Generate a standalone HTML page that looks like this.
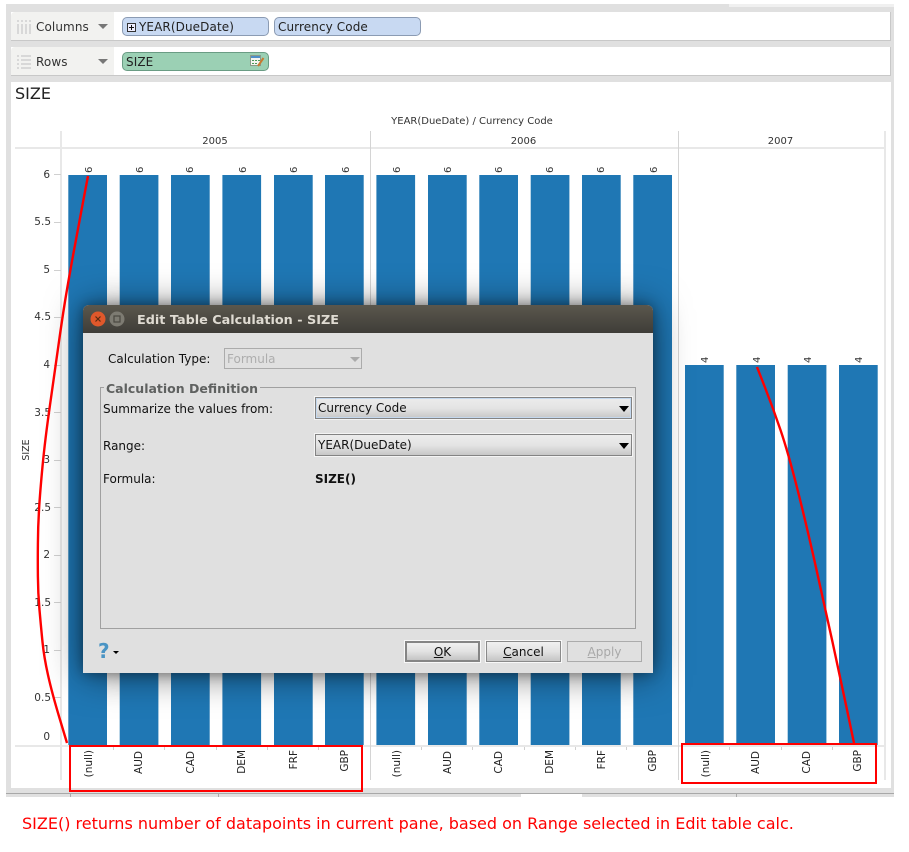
<!DOCTYPE html>
<html><head><meta charset="utf-8"><title>SIZE</title>
<style>
html,body{margin:0;padding:0;background:#fff}
body{width:909px;height:852px;position:relative;overflow:hidden;font-family:"DejaVu Sans",sans-serif;color:#222}
div{position:absolute;box-sizing:border-box}
.pill{border-radius:5px;border:1px solid #8b9bb3;background:#c8d9f2;font-size:12px;letter-spacing:.1px;line-height:19px;padding-left:3px;color:#222;white-space:nowrap}
.shelf{left:11px;width:880px;height:29px;background:#fff;border-bottom:1px solid #c8c8c8;border-right:1px solid #c8c8c8}
.hd{left:11px;width:103px;height:28px;background:#f2f2f0;border-radius:4px 0 0 0;font-size:12px;letter-spacing:.1px;line-height:30px;padding-left:25px;color:#333}
.arr{width:0;height:0;border-left:5px solid transparent;border-right:5px solid transparent;border-top:5px solid #777}
.l{font-size:12px;line-height:16px;color:#111;white-space:nowrap}
.combo{left:315px;width:317px;height:22px;border:1px solid #838383;outline:1px solid #f4f4f4;background:linear-gradient(#ececec,#e4e4e4 50%,#c6c6c6);font-size:12px;line-height:21px;padding-left:2px;color:#111}
.ca{top:8px;width:0;height:0;border-left:5px solid transparent;border-right:5px solid transparent;border-top:6px solid #000;right:2px}
.btn{top:641px;width:75px;height:21px;text-align:center;font-size:12px;line-height:21px;color:#111;background:linear-gradient(#f0f0f0,#e2e2e2 50%,#c4c4c4);border:1px solid #8a8a8a;outline:1px solid #f8f8f8}
</style></head><body>
<div style="left:6px;top:4px;width:888px;height:793px;background:#e0e0e0"></div>
<div style="left:729px;top:4px;width:165px;height:3px;background:#f0f0f0"></div>
<div style="left:6px;top:793px;width:888px;height:1px;background:#a8a8a8"></div>
<div style="left:521px;top:794px;width:61px;height:3px;background:#fff"></div>
<div style="left:70px;top:794px;width:1px;height:3px;background:#aaa"></div>
<div style="left:218px;top:794px;width:1px;height:3px;background:#aaa"></div>
<div style="left:736px;top:794px;width:1px;height:3px;background:#aaa"></div>

<div class="shelf" style="top:12px"></div>
<div class="hd" style="top:12px">Columns</div>
<div class="arr" style="left:98px;top:24px"></div>
<svg style="position:absolute;left:16px;top:19px" width="16" height="15"><g fill="#d8d8d8"><rect x="1" y="1" width="2" height="2"/><rect x="5" y="1" width="2" height="2"/><rect x="9" y="1" width="2" height="2"/><rect x="13" y="1" width="2" height="2"/><rect x="1" y="5" width="2" height="10"/><rect x="5" y="5" width="2" height="10"/><rect x="9" y="5" width="2" height="10"/><rect x="13" y="5" width="2" height="10"/></g></svg>
<div class="pill" style="left:122px;top:17px;width:147px;height:19px;padding-left:16px">YEAR(DueDate)</div>
<svg style="position:absolute;left:127px;top:23px" width="9" height="9"><rect x=".5" y=".5" width="8" height="8" fill="#eef" stroke="#333"/><path d="M2 4.500H7M4.500 2V7" stroke="#111"/></svg>
<div class="pill" style="left:274px;top:17px;width:147px;height:19px">Currency Code</div>

<div class="shelf" style="top:47px"></div>
<div class="hd" style="top:47px">Rows</div>
<div class="arr" style="left:98px;top:59px"></div>
<svg style="position:absolute;left:16px;top:54px" width="16" height="16"><g fill="#d8d8d8"><rect x="1" y="1" width="2" height="2"/><rect x="5" y="1" width="10" height="2"/><rect x="1" y="5" width="2" height="2"/><rect x="5" y="5" width="10" height="2"/><rect x="1" y="9" width="2" height="2"/><rect x="5" y="9" width="10" height="2"/><rect x="1" y="13" width="2" height="2"/><rect x="5" y="13" width="10" height="2"/></g></svg>
<div class="pill" style="left:122px;top:52px;width:147px;height:19px;background:#9bd0b4;border-color:#6a9c84">SIZE</div>
<svg style="position:absolute;left:250px;top:55px" width="15" height="12"><rect x=".5" y=".5" width="10" height="10" fill="#f4f4f0" stroke="#8a9a8a"/><rect x="1" y="1" width="9" height="2" fill="#4f8fc8"/><g fill="#4a9a5a"><rect x="2" y="5" width="2" height="1"/><rect x="5" y="5" width="2" height="1"/><rect x="8" y="5" width="2" height="1"/><rect x="2" y="8" width="2" height="1"/><rect x="5" y="8" width="2" height="1"/></g><path d="M8 11L13.500 3" stroke="#c87a30" stroke-width="2"/></svg>

<div style="left:11px;top:82px;width:880px;height:706px;background:#fff"></div>
<div style="left:15px;top:84px;font-size:16px;line-height:20px;color:#222">SIZE</div>

<svg style="position:absolute;left:0;top:0" width="909" height="852" font-family="DejaVu Sans" font-size="10" fill="#333">
<text x="472" y="124" text-anchor="middle" font-size="10">YEAR(DueDate) / Currency Code</text>
<g text-anchor="middle" font-size="10"><text x="215" y="144">2005</text><text x="523.5" y="144">2006</text><text x="780.5" y="144">2007</text></g>
<g fill="#e8e8e8"><rect x="15" y="147" width="870" height="2"/><rect x="15" y="745" width="870" height="2"/><rect x="60" y="131" width="2" height="649"/><rect x="884" y="131" width="2" height="649"/></g>
<rect x="370" y="131" width="1" height="649" fill="#d4d4d4"/><rect x="678" y="131" width="1" height="649" fill="#d4d4d4"/>
<g fill="#1f77b4">
<rect x="68.3" y="175" width="38.7" height="570"/><rect x="119.7" y="175" width="38.7" height="570"/><rect x="171" y="175" width="38.7" height="570"/><rect x="222.4" y="175" width="38.7" height="570"/><rect x="274" y="175" width="38.7" height="570"/><rect x="325" y="175" width="38.7" height="570"/>
<rect x="376.4" y="175" width="38.7" height="570"/><rect x="428" y="175" width="38.7" height="570"/><rect x="479.3" y="175" width="38.7" height="570"/><rect x="530.7" y="175" width="38.7" height="570"/><rect x="582" y="175" width="38.7" height="570"/><rect x="633.3" y="175" width="38.7" height="570"/>
<rect x="685" y="365" width="38.7" height="380"/><rect x="736.3" y="365" width="38.7" height="380"/><rect x="787.7" y="365" width="38.7" height="380"/><rect x="839" y="365" width="38.7" height="380"/>
</g>
<g stroke="#d0d0d0"><path d="M54 174.500H61M54 222.500H61M54 270.500H61M54 317.500H61M54 365.500H61M54 412.500H61M54 460.500H61M54 507.500H61M54 555.500H61M54 602.500H61M54 650.500H61M54 697.500H61"/>
<path d="M113.500 747V750M164.500 747V750M216.500 747V750M267.500 747V750M318.500 747V750M421.500 747V750M472.500 747V750M524.500 747V750M575.500 747V750M626.500 747V750M729.500 747V750M781.500 747V750M832.500 747V750"/></g>
<g text-anchor="end" font-size="10.5" fill="#333"><text x="50" y="178">6</text><text x="51" y="225">5.5</text><text x="50" y="273">5</text><text x="51" y="320">4.5</text><text x="50" y="368">4</text><text x="51" y="416">3.5</text><text x="50" y="463">3</text><text x="51" y="511">2.5</text><text x="50" y="558">2</text><text x="51" y="606">1.5</text><text x="50" y="653">1</text><text x="51" y="701">0.5</text><text x="50" y="740">0</text></g>
<text transform="translate(29,450) rotate(-90)" text-anchor="middle" font-size="9.5">SIZE</text>
<g font-size="10" text-anchor="start" fill="#333">
<text transform="translate(92,173) rotate(-90)">6</text><text transform="translate(143,173) rotate(-90)">6</text><text transform="translate(193,173) rotate(-90)">6</text><text transform="translate(246,173) rotate(-90)">6</text><text transform="translate(297,173) rotate(-90)">6</text><text transform="translate(349,173) rotate(-90)">6</text>
<text transform="translate(400,173) rotate(-90)">6</text><text transform="translate(451,173) rotate(-90)">6</text><text transform="translate(502,173) rotate(-90)">6</text><text transform="translate(553,173) rotate(-90)">6</text><text transform="translate(604,173) rotate(-90)">6</text><text transform="translate(657,173) rotate(-90)">6</text>
<text transform="translate(708,363) rotate(-90)">4</text><text transform="translate(760,363) rotate(-90)">4</text><text transform="translate(811,363) rotate(-90)">4</text><text transform="translate(862,363) rotate(-90)">4</text>
</g>
<g font-size="10.5" text-anchor="end" fill="#222">
<text transform="translate(92,750) rotate(-90)">(null)</text><text transform="translate(142,751) rotate(-90)">AUD</text><text transform="translate(194,751) rotate(-90)">CAD</text><text transform="translate(245,750) rotate(-90)">DEM</text><text transform="translate(297,750) rotate(-90)">FRF</text><text transform="translate(348,750) rotate(-90)">GBP</text>
<text transform="translate(400,750) rotate(-90)">(null)</text><text transform="translate(451,751) rotate(-90)">AUD</text><text transform="translate(502,751) rotate(-90)">CAD</text><text transform="translate(553,750) rotate(-90)">DEM</text><text transform="translate(605,750) rotate(-90)">FRF</text><text transform="translate(656,750) rotate(-90)">GBP</text>
<text transform="translate(709,750) rotate(-90)">(null)</text><text transform="translate(759,751) rotate(-90)">AUD</text><text transform="translate(810,751) rotate(-90)">CAD</text><text transform="translate(861,750) rotate(-90)">GBP</text>
</g>
</svg>

<div style="left:83px;top:305px;width:570px;height:368px;background:#e0e0e0;border-radius:6px 6px 0 0;box-shadow:0 0 12px rgba(0,0,0,.35),0 2px 36px rgba(0,0,0,.55)"></div>
<div style="left:83px;top:305px;width:570px;height:28px;background:linear-gradient(#5b574d,#3f3d38);border-radius:6px 6px 0 0"></div>
<svg style="position:absolute;left:89px;top:310px" width="40" height="18"><circle cx="9" cy="9" r="7.500" fill="#e0582b"/><path d="M6.500 6.500L11.500 11.500M11.500 6.500L6.500 11.500" stroke="#5a2a10" stroke-width="1.200"/><circle cx="28" cy="9" r="7.500" fill="#7d7b72"/><rect x="25" y="6" width="6" height="6" fill="none" stroke="#4a4840" stroke-width="1.200"/></svg>
<div style="left:137px;top:312px;font-size:12.8px;font-weight:bold;line-height:17px;color:#dfdbd2;white-space:nowrap">Edit Table Calculation - SIZE</div>

<div class="l" style="left:108px;top:351px">Calculation Type:</div>
<div style="left:224px;top:348px;width:138px;height:21px;border:1px solid #ababab;font-size:12px;line-height:21px;color:#adadad;padding-left:2px">Formula</div>
<div class="arr" style="left:350px;top:357px;border-top-color:#aaa"></div>

<div style="left:100px;top:387px;width:536px;height:242px;border:1px solid #a0a0a0"></div>
<div style="left:104px;top:381px;background:#e0e0e0;padding:0 2px;font-size:12.5px;font-weight:bold;line-height:15px;color:#5f6160;white-space:nowrap">Calculation Definition</div>
<div class="l" style="left:103px;top:401px">Summarize the values from:</div>
<div class="combo" style="top:397px;box-shadow:inset 0 0 0 1px #c4d8ee">Currency Code<div class="ca"></div></div>
<div class="l" style="left:103px;top:438px">Range:</div>
<div class="combo" style="top:434px">YEAR(DueDate)<div class="ca"></div></div>
<div class="l" style="left:103px;top:471px">Formula:</div>
<div class="l" style="left:315px;top:471px;font-weight:bold">SIZE()</div>

<div style="left:98px;top:641px;font-size:20px;font-weight:bold;line-height:21px;color:#4a94c4">?</div>
<div style="left:113px;top:651px;width:0;height:0;border-left:3px solid transparent;border-right:3px solid transparent;border-top:3px solid #000"></div>
<div class="btn" style="left:405px;border:2px solid #858585;line-height:19px"><u>O</u>K</div>
<div class="btn" style="left:486px"><u>C</u>ancel</div>
<div class="btn" style="left:567px;background:#e0e0e0;border-color:#ababab;outline:none;color:#a8a8a8"><u>A</u>pply</div>

<svg style="position:absolute;left:0;top:0" width="909" height="852" fill="none" stroke="#f00" stroke-width="2">
<path stroke-width="2.400" d="M88 176L83.500 199.500Q79 223 73.500 253Q68 283 65 301.500Q62 320 58.500 345Q55 370 50 405Q45 440 42.500 466.500Q40 493 39 510Q38 527 37.900 543.500Q37.700 560 37.900 576.500Q38 593 39.500 610Q41 627 42.500 642Q44 657 48 675Q52 693 59.500 718L67 743"/>
<path stroke-width="2.400" d="M757 367L765 387.500Q773 408 780.500 430Q788 452 797.500 489.500Q807 527 817 572Q827 617 832.500 642Q838 667 846 705L854 743"/>
<rect x="70" y="746" width="292" height="45"/>
<rect x="682" y="744" width="194" height="39"/>
</svg>
<div style="left:22px;top:814px;font-size:16px;line-height:20px;color:#f00;white-space:nowrap">SIZE() returns number of datapoints in current pane, based on Range selected in Edit table calc.</div>
</body></html>
